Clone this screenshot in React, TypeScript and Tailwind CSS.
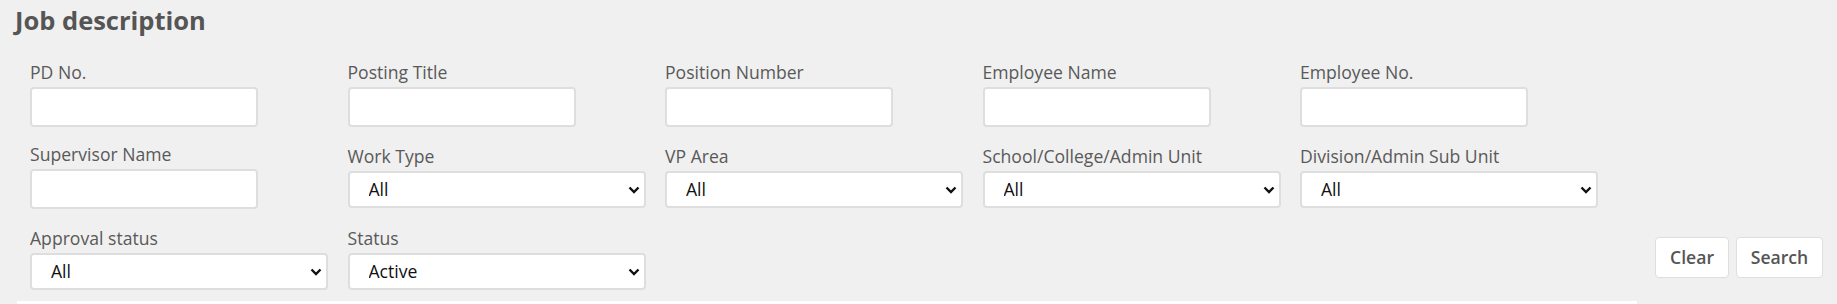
import React from "react";

const font = { fontFamily: '"Open Sans", "Liberation Sans", sans-serif' };

function Label({ text }: { text: string }) {
  return <div className="text-[17.6px] leading-[24px] text-[#595959] mb-[3px] whitespace-nowrap">{text}</div>;
}

function TextField({ label }: { label: string }) {
  return (
    <div className="w-[317.5px] shrink-0">
      <Label text={label} />
      <input
        type="text"
        className="block w-[228px] h-[40px] bg-white border-2 border-[#dedede] rounded-[4px] outline-none"
      />
    </div>
  );
}

function SelectField({ label, value }: { label: string; value: string }) {
  return (
    <div className="w-[317.5px] shrink-0">
      <Label text={label} />
      <div className="relative w-[298px]">
        <select
          defaultValue={value}
          className="block w-full h-[37px] appearance-none bg-white border-2 border-[#dedede] rounded-[4px] pl-[19px] text-[17.6px] text-[#111] outline-none"
        >
          <option>{value}</option>
        </select>
        <svg
          className="absolute right-[6px] top-[15px] pointer-events-none"
          width="12"
          height="8"
          viewBox="0 0 12 8"
        >
          <path d="M1.5 1.5 L6 6 L10.5 1.5" fill="none" stroke="#111" strokeWidth="2.4" />
        </svg>
      </div>
    </div>
  );
}

export default function App() {
  return (
    <div className="bg-[#f0f0f0] w-[1837px] h-[304px] overflow-hidden" style={font}>
      <div className="pl-[15px] pr-[14px] pt-[3px]">
        <h1 className="text-[25.5px] leading-[34px] font-bold text-[#555]">Job description</h1>

        <div className="pl-[15px] pt-[23px]">
          <div className="flex items-center h-[67px]">
            <TextField label="PD No." />
            <TextField label="Posting Title" />
            <TextField label="Position Number" />
            <TextField label="Employee Name" />
            <TextField label="Employee No." />
          </div>

          <div className="flex items-center h-[67px] mt-[15px]">
            <TextField label="Supervisor Name" />
            <SelectField label="Work Type" value="All" />
            <SelectField label="VP Area" value="All" />
            <SelectField label="School/College/Admin Unit" value="All" />
            <SelectField label="Division/Admin Sub Unit" value="All" />
          </div>

          <div className="flex items-center h-[67px] mt-[15px]">
            <SelectField label="Approval status" value="All" />
            <SelectField label="Status" value="Active" />
            <div className="ml-auto flex gap-[7px]">
              <button className="h-[41px] w-[74px] bg-white border border-[#dedede] rounded-[4px] text-[17.6px] font-semibold text-[#555]">
                Clear
              </button>
              <button className="h-[41px] w-[87px] bg-white border border-[#dedede] rounded-[4px] text-[17.6px] font-semibold text-[#555]">
                Search
              </button>
            </div>
          </div>
        </div>

        <div className="ml-[2px] mt-[10px] w-[1620px] h-[20px] bg-white" />
      </div>
    </div>
  );
}
